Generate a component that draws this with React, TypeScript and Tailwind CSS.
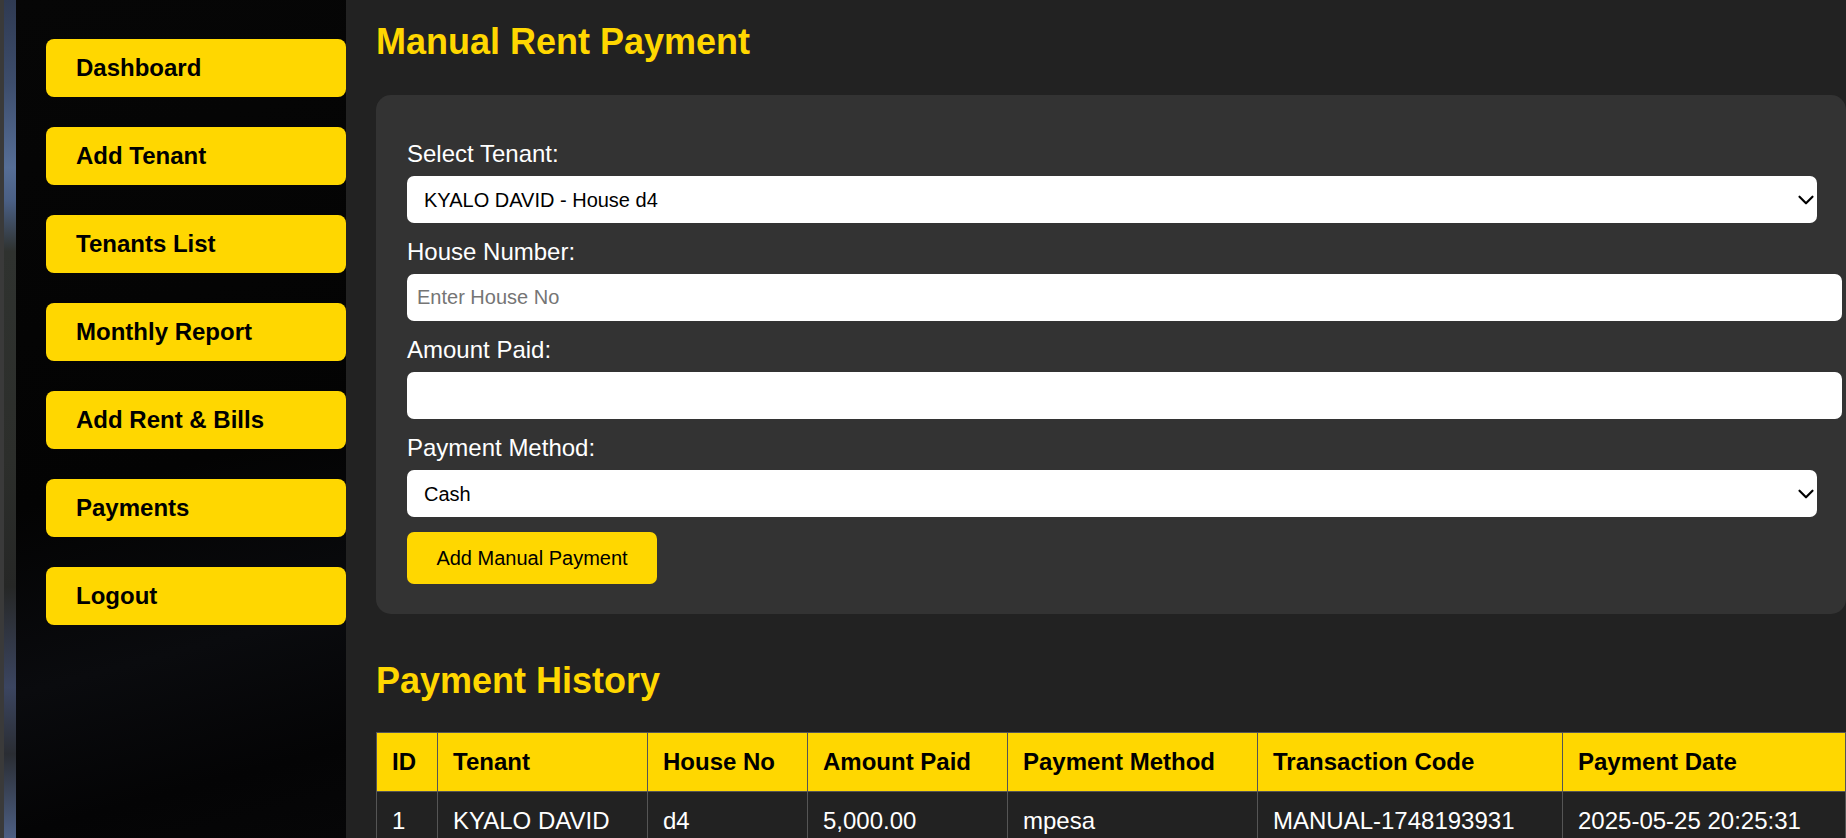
import React from 'react';
import { ChevronDown } from 'lucide-react';

const navItems = ['Dashboard', 'Add Tenant', 'Tenants List', 'Monthly Report', 'Add Rent & Bills', 'Payments', 'Logout'];

const columns = [
  { label: 'ID', width: 'w-[61px]' },
  { label: 'Tenant', width: 'w-[210px]' },
  { label: 'House No', width: 'w-[160px]' },
  { label: 'Amount Paid', width: 'w-[200px]' },
  { label: 'Payment Method', width: 'w-[250px]' },
  { label: 'Transaction Code', width: 'w-[305px]' },
  { label: 'Payment Date', width: 'w-auto' },
];

const payments = [
  {
    id: 1,
    tenant: 'KYALO DAVID',
    house: 'd4',
    amount: '5,000.00',
    method: 'mpesa',
    code: 'MANUAL-1748193931',
    date: '2025-05-25 20:25:31',
  },
];

function Label({ children }: { children: React.ReactNode }) {
  return <label className="block mt-[15px] mb-[8px] text-[24px] leading-[28px] text-white">{children}</label>;
}

function Select({ value, options }: { value: string; options: string[] }) {
  return (
    <div className="relative w-full">
      <select
        defaultValue={value}
        className="block w-full h-[47px] appearance-none rounded-[7px] bg-white pl-[17px] pr-[40px] text-[20px] text-black outline-none"
      >
        {options.map((o) => (
          <option key={o}>{o}</option>
        ))}
      </select>
      {/* native-looking arrow */}
      <ChevronDown
        size={26}
        strokeWidth={2}
        className="pointer-events-none absolute right-[-2px] top-[11px] text-black"
      />
    </div>
  );
}

export default function App() {
  return (
    <div className="flex h-screen w-full overflow-hidden bg-[#222222] font-['Liberation_Sans',Arial,sans-serif]">
      {/* Background photo edge */}
      <div className="flex w-[16px] shrink-0">
        <div className="w-[4px] bg-[#3a3a3a]" />
        <div className="flex-1 bg-[linear-gradient(180deg,#2f3a52_0%,#3d4d6c_10%,#566e96_20%,#4a5f84_24%,#2f322f_30%,#2c2e2b_55%,#262726_70%,#3b4560_82%,#2a2d33_90%,#4d5f84_100%)]" />
      </div>

      {/* Sidebar */}
      <aside className="flex w-[330px] shrink-0 flex-col gap-[30px] bg-[linear-gradient(165deg,#060606_0%,#030303_55%,#0a0b0e_75%,#040405_90%,#060607_100%)] pl-[30px] pt-[39px]">
        {navItems.map((item) => (
          <a
            key={item}
            href="#"
            className="flex h-[58px] w-[300px] items-center rounded-[8px] bg-[#FFD700] pl-[30px] text-[24px] font-bold text-black"
          >
            {item}
          </a>
        ))}
      </aside>

      {/* Main */}
      <main className="min-w-0 flex-1 pl-[30px]">
        <h2 className="pt-[21px] mb-[33px] text-[36px] leading-[41px] font-bold text-[#FFD700]">Manual Rent Payment</h2>

        <form className="rounded-[15px] bg-[#333333] pl-[31px] pr-[29px] pt-[30px] pb-[30px]" onSubmit={(e) => e.preventDefault()}>
          <Label>Select Tenant:</Label>
          <Select value="KYALO DAVID - House d4" options={['KYALO DAVID - House d4']} />

          <Label>House Number:</Label>
          <input
            type="text"
            placeholder="Enter House No"
            className="block h-[47px] w-[calc(100%+25px)] rounded-[7px] bg-white pl-[10px] text-[20px] text-black outline-none placeholder:text-[#757575]"
          />

          <Label>Amount Paid:</Label>
          <input
            type="number"
            className="block h-[47px] w-[calc(100%+25px)] rounded-[7px] bg-white pl-[10px] text-[20px] text-black outline-none"
          />

          <Label>Payment Method:</Label>
          <Select value="Cash" options={['Cash', 'Mpesa', 'Bank']} />

          <button
            type="submit"
            className="mt-[15px] h-[52px] w-[250px] rounded-[7px] bg-[#FFD700] text-[20px] text-black"
          >
            Add Manual Payment
          </button>
        </form>

        <h2 className="mt-[46px] mb-[31px] text-[36px] leading-[41px] font-bold text-[#FFD700]">Payment History</h2>

        <table className="w-full table-fixed border-collapse text-left text-[24px] leading-[28px]">
          <colgroup>
            {columns.map((c) => (
              <col key={c.label} className={c.width} />
            ))}
          </colgroup>
          <thead>
            <tr className="bg-[#FFD700] text-black">
              {columns.map((c) => (
                <th key={c.label} className="border border-[#555555] px-[15px] py-[15px] font-bold">
                  {c.label}
                </th>
              ))}
            </tr>
          </thead>
          <tbody>
            {payments.map((p) => (
              <tr key={p.id} className="text-white">
                <td className="border border-[#555555] px-[15px] py-[15px]">{p.id}</td>
                <td className="border border-[#555555] px-[15px] py-[15px]">{p.tenant}</td>
                <td className="border border-[#555555] px-[15px] py-[15px]">{p.house}</td>
                <td className="border border-[#555555] px-[15px] py-[15px]">{p.amount}</td>
                <td className="border border-[#555555] px-[15px] py-[15px]">{p.method}</td>
                <td className="border border-[#555555] px-[15px] py-[15px]">{p.code}</td>
                <td className="border border-[#555555] px-[15px] py-[15px]">{p.date}</td>
              </tr>
            ))}
          </tbody>
        </table>
      </main>
    </div>
  );
}
